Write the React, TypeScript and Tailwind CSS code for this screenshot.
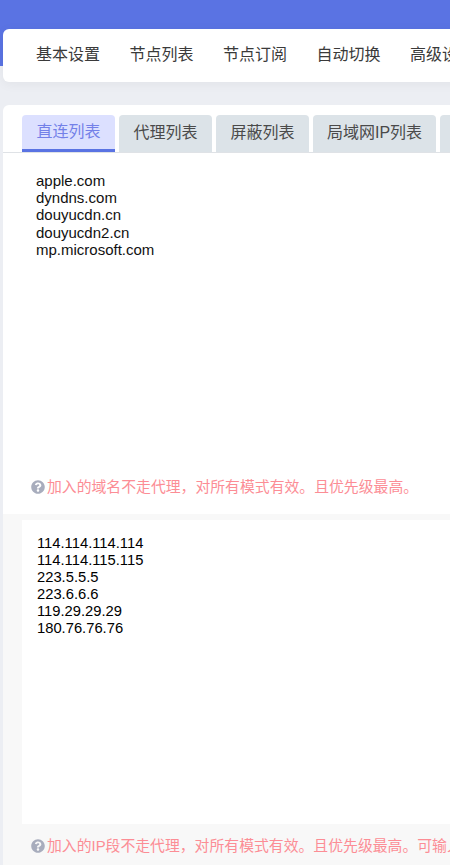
import { FaQuestionCircle } from 'react-icons/fa'

const NAV = ['基本设置', '节点列表', '节点订阅', '自动切换', '高级设置']
const TABS = [
  { label: '直连列表', w: 'w-[93px]' },
  { label: '代理列表', w: 'w-[93px]' },
  { label: '屏蔽列表', w: 'w-[93px]' },
  { label: '局域网IP列表', w: 'w-[123px]' },
  { label: '其他', w: 'w-[93px]' },
]
const DOMAINS = ['apple.com', 'dyndns.com', 'douyucdn.cn', 'douyucdn2.cn', 'mp.microsoft.com']
const IPS = ['114.114.114.114', '114.114.115.115', '223.5.5.5', '223.6.6.6', '119.29.29.29', '180.76.76.76']

function Hint({ text }: { text: string }) {
  return (
    <p className="flex items-center whitespace-nowrap text-[14.85px] leading-[20px] text-[#fc8d95]">
      <FaQuestionCircle className="mr-[2px] h-[14px] w-[14px] shrink-0 text-[#a8adbd]" />
      {text}
    </p>
  )
}

export default function App() {
  return (
    <div
      className="h-[865px] w-[450px] overflow-hidden bg-[#eceef3]"
      style={{ fontFamily: '"Liberation Sans", "Noto Sans CJK SC", sans-serif' }}
    >
      {/* Header */}
      <div className="h-[66px] bg-[#5a73e3]" />

      {/* Nav */}
      <div className="-mt-[37px] ml-[3px] flex h-[53px] w-[600px] items-center gap-[29.5px] rounded-l-[6px] bg-white pb-[2px] pl-[33px] text-[16px] text-[#3a3a3a] shadow-[0_2px_12px_rgba(0,0,0,0.05)]">
        {NAV.map(item => (
          <span key={item} className="shrink-0 whitespace-nowrap">{item}</span>
        ))}
      </div>

      {/* Direct list */}
      <div className="ml-[3px] mt-[23px] w-[600px] rounded-tl-[6px] bg-white">
        <div className="flex h-[48px] items-end gap-[4px] border-b border-[#dfe2e6] pl-[19px]">
          {TABS.map((tab, i) => (
            <div
              key={tab.label}
              className={`flex h-[37px] shrink-0 items-center justify-center rounded-t-[4px] whitespace-nowrap text-[16px] ${tab.w} ${
                i === 0
                  ? 'border-b-[3px] border-[#5a73e3] bg-[#dce0ff] text-[#7380e8]'
                  : 'bg-[#dce3e8] pb-[2px] text-[#4a4a4a]'
              }`}
            >
              {tab.label}
            </div>
          ))}
        </div>
        <div className="h-[361px] pl-[33px] pt-[19px] text-[15px] leading-[17.2px] text-[#111]">
          <div className="h-[305px]">
            {DOMAINS.map(d => <div key={d}>{d}</div>)}
          </div>
          <div className="-ml-[5px]">
            <Hint text="加入的域名不走代理，对所有模式有效。且优先级最高。" />
          </div>
        </div>
      </div>

      {/* IP list */}
      <div className="ml-[3px] h-[351px] w-[600px] bg-[#f8f8f8] pl-[19px] pt-[6px]">
        <div className="h-[304px] bg-white pl-[15px] pt-[15px] text-[14.75px] leading-[17px] text-black">
          {IPS.map(ip => <div key={ip}>{ip}</div>)}
        </div>
        <div className="mt-[12px] pl-[9px]">
          <Hint text="加入的IP段不走代理，对所有模式有效。且优先级最高。可输入IP地址或IP段。" />
        </div>
      </div>
    </div>
  )
}
